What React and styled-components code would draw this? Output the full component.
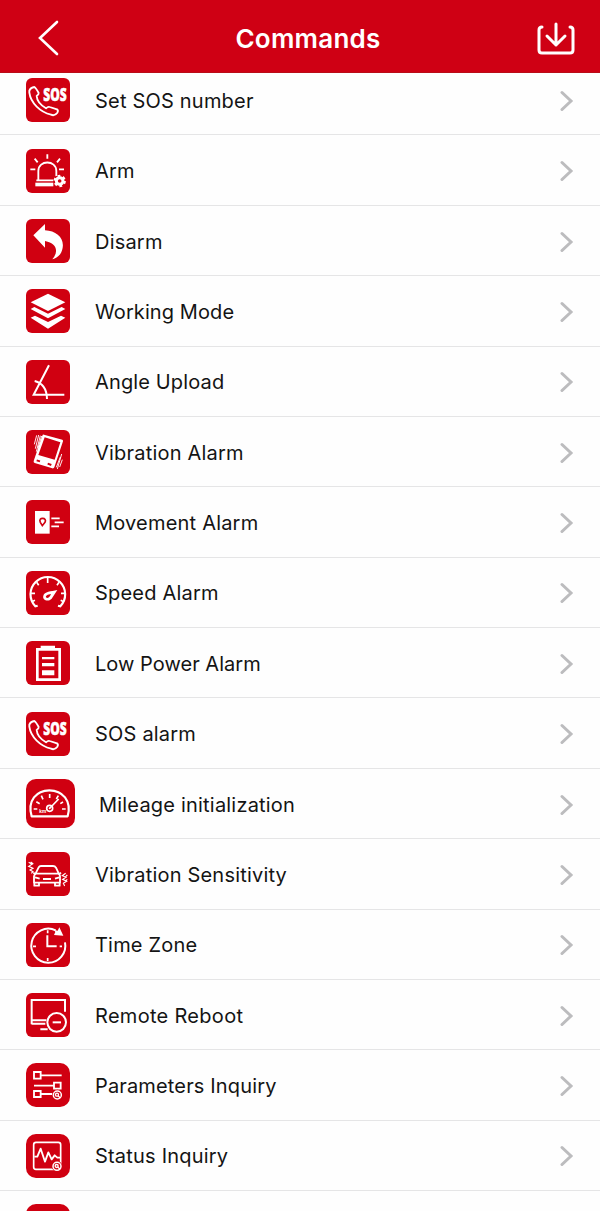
import React from 'react';
import styled, { createGlobalStyle } from 'styled-components';

const GlobalStyle = createGlobalStyle`
  * { box-sizing: border-box; }
  body { margin: 0; background: #fff; }
`;

const Screen = styled.main`
  height: 1211px;
  overflow: hidden;
  display: flex;
  flex-direction: column;
  background: #fefefe;
  font-family: Inter, 'Liberation Sans', sans-serif;
`;

const Header = styled.header`
  flex: none;
  height: 73px;
  padding: 4px 25px 0 38px;
  display: grid;
  grid-template-columns: 60px 1fr 60px;
  align-items: center;
  background: #cf0014;
  border-bottom: 1px solid #b90d18;
  color: #fff;
  z-index: 1;
`;

const Title = styled.h1`
  margin: 0;
  padding: 2px 0 0 3px;
  text-align: center;
  font-size: 26px;
  line-height: 32px;
  font-weight: 600;
  letter-spacing: 0.25px;
`;

const HeaderButton = styled.button`
  display: flex;
  justify-self: ${(p) => p.$side};
  padding: 0;
  border: 0;
  background: none;
  color: inherit;
`;

const List = styled.ul`
  flex: none;
  list-style: none;
  margin: -7.9px 0 0;
  padding: 0;
`;

const Row = styled.li`
  height: 70.38px;
  padding: 2px 26px 0;
  display: flex;
  align-items: center;
  border-bottom: 1.5px solid #e5e5e6;
`;

const Tile = styled.svg`
  flex: none;
  width: ${(p) => p.$size}px;
  height: ${(p) => p.$size}px;
  margin-bottom: 1.2px;
  border-radius: ${(p) => p.$radius}px;
  overflow: visible;
  background: #d00011;
  fill: none;
  stroke: #fff;
  stroke-width: 6;
`;

const Label = styled.span`
  flex: 1;
  margin-left: ${(p) => p.$gap}px;
  font-size: 20px;
  line-height: 26px;
  letter-spacing: ${(p) => p.$spacing}px;
  white-space: nowrap;
  color: #141414;
`;

const Chevron = styled.svg`
  flex: none;
  width: 14px;
  height: 22px;
  fill: none;
  stroke: #bcbcbe;
  stroke-width: 3;
  stroke-linecap: round;
`;

const SosText = styled.text`
  font-family: 'Open Sans', sans-serif;
  font-size: 50px;
  font-weight: 800;
  fill: #fff;
  stroke: #fff;
  stroke-width: 1.5;
`;

const UnitText = styled.text`
  font-family: Inter, sans-serif;
  font-size: 14px;
  font-weight: 700;
  fill: #fff;
  stroke: none;
`;

const solid = { fill: '#fff', stroke: 'none' };
const red = '#d00011';

const Sos = () => (
  <>
    <path strokeWidth="5.5" strokeLinejoin="round" d="M10 38Q14 28 25 27Q30 30 38 45Q39 49 32 54C33 70 45 82 60 91Q66 85 71 87L93 94Q98 98 94 104Q86 115 75 110C43 102 14 75 10 44Z" />
    <SosText x="52" y="69" textLength="70" lengthAdjust="spacingAndGlyphs">SOS</SosText>
  </>
);

const Arm = () => (
  <>
    <path strokeWidth="5.5" d="M37 92V66C37 32 91 32 91 66V82M31 94H82M64 16V29M26 29L35 40M102 29L93 40M13 61H28M99 61H114" />
    <path {...solid} d="M28 101H82V112H28Z" />
    <circle cx="101" cy="96" r="18" fill={red} stroke="none" />
    <circle cx="101" cy="96" r="10" strokeWidth="9" />
    <circle cx="101" cy="96" r="15" strokeWidth="7" strokeDasharray="8 7.7" />
  </>
);

const Disarm = () => (
  <path {...solid} d="M22 49L57 15V34C91 36 115 56 110 86C107 105 96 116 79 121C98 98 94 73 57 66V86Z" />
);

const Layers = () => (
  <g {...solid}>
    <path d="M66 14L118 40L66 66L14 40Z" />
    <path d="M14 60L25 54L66 74L107 54L118 60L66 88Z" />
    <path d="M14 86L27 80L66 99L105 80L118 86L66 119Z" />
  </g>
);

const Angle = () => (
  <path d="M69 16L23 104H115M26 63Q62 72 63 117" />
);

const Phone = () => (
  <>
    <path {...solid} fillRule="evenodd" d="M54 14L109 29Q112 31 111 34L85 112Q83 116 79 115L26 99Q22 97 23 93L49 17Q50 13 54 14ZM56 22L37 75L86 89L103 37Z" />
    <path stroke={red} strokeWidth="6" d="M32 91L42 94M65 101L76 105" />
    <path strokeWidth="2.8" d="M32 16L25 43M38 15L28 56M43 17L31 65M107 72L94 117M103 81L91 112M109 89L101 111M47 18L36 54" />
  </>
);

const Movement = () => (
  <>
    <path {...solid} d="M27 33H71V101H27Z" />
    <path stroke={red} strokeWidth="5" fill="none" d="M49 77L43 67C39 58 44 55 50 55C56 55 61 60 57 67Z" />
    <path strokeWidth="5.5" d="M76 55H101M86 67H113M76 79H99" />
  </>
);

const Speed = () => (
  <>
    <path strokeWidth="6.5" d="M35 104L28 106A52 52 0 1 1 103 106L96 104" />
    <path strokeWidth="5" d="M65 21V36M32 34L38 43M99 34L93 43M15 67H27M117 67H105M17 92L27 88M113 92L104 88" />
    <path {...solid} fillRule="evenodd" d="M94 57L77 83C66 94 48 87 52 74C55 62 75 61 94 57ZM75 69C65 70 58 74 60 79C64 84 71 79 75 69Z" />
  </>
);

const Battery = () => (
  <>
    <path strokeWidth="8" d="M34 25H101V116H34Z" />
    <path {...solid} d="M44 14H87V24H44ZM48 48H85V55H48ZM48 66H85V76H48ZM48 88H85V103H48Z" />
  </>
);

const Mileage = () => (
  <>
    <path strokeWidth="6.5" strokeLinejoin="round" d="M17 112C3 65 32 34 70 34C109 34 138 65 125 112Z" />
    <path strokeWidth="5" d="M71 45V57M46 50L51 61M31 68L41 74M23 90H34M97 50L91 60M111 69L103 74M108 90H119M72 87L98 60" />
    <circle cx="71" cy="88" r="9" strokeWidth="5" />
    <circle cx="71" cy="88" r="3" {...solid} />
    <UnitText x="40" y="103" textLength="21">km</UnitText>
  </>
);

const Car = () => (
  <>
    <path strokeWidth="5.5" strokeLinejoin="round" d="M29 64L38 46Q40 42 45 42H81Q87 42 90 47L98 64M30 65H97Q102 67 102 73V92H24V73Q25 67 30 65M22 62L29 68M105 62L98 68M25 92V101H39V93M87 93V101H101V92M51 81H75" />
    <path strokeWidth="5" d="M27 76L41 80M100 76L87 80" />
    <path strokeWidth="3.4" d="M8 31L18 37L8 43L21 49L12 54L21 59L16 64M14 30L22 36M119 64L109 71L120 76L110 82L122 88L112 94L116 102M124 69L119 74M124 82L118 87" />
  </>
);

const Clock = () => (
  <>
    <path d="M89 22A51 51 0 1 0 117 58M64 37V70H92" />
    <path {...solid} d="M84 36L88 27L84 21L95 23L100 13L112 38Z" />
    <path strokeWidth="5" d="M65 22V31M65 105V114M21 70H30M101 70H108" />
  </>
);

const Reboot = () => (
  <>
    <path d="M17 94V21H117V56M17 82H61M17 92H58M43 109H65" />
    <circle cx="92" cy="88" r="28" />
    <path d="M80 88H105" />
  </>
);

const Search = ({ cx, cy }) => (
  <>
    <circle cx={cx} cy={cy} r="16" fill={red} stroke="none" />
    <circle cx={cx} cy={cy} r="12" strokeWidth="4.5" />
    <circle cx={cx - 1} cy={cy - 1} r="4.5" strokeWidth="4" />
    <path strokeWidth="4" d={`M${cx + 2} ${cy + 2}L${cx + 9} ${cy + 9}`} />
  </>
);

const Parameters = () => (
  <>
    <path strokeWidth="5.5" d="M24 27H44V47H24ZM44 37H107M84 59H104V77H84ZM24 68H84M24 84H44V102H24ZM44 93H80" />
    <Search cx={94} cy={96} />
  </>
);

const Status = () => (
  <>
    <rect x="23" y="25" width="81" height="81" rx="7" strokeWidth="5" />
    <path strokeWidth="5.5" strokeLinejoin="round" d="M25 68H34L44 44L57 83L67 55L77 76L86 64L94 71H103" />
    <Search cx={93} cy={97} />
  </>
);

const commands = [
  { label: 'Set SOS number', icon: Sos },
  { label: 'Arm', icon: Arm },
  { label: 'Disarm', icon: Disarm },
  { label: 'Working Mode', icon: Layers, spacing: 0.1 },
  { label: 'Angle Upload', icon: Angle, spacing: 0.14 },
  { label: 'Vibration Alarm', icon: Phone },
  { label: 'Movement Alarm', icon: Movement },
  { label: 'Speed Alarm', icon: Speed },
  { label: 'Low Power Alarm', icon: Battery, spacing: 0.03 },
  { label: 'SOS alarm', icon: Sos },
  { label: 'Mileage initialization', icon: Mileage, size: 49, radius: 10, gap: 24 },
  { label: 'Vibration Sensitivity', icon: Car },
  { label: 'Time Zone', icon: Clock },
  { label: 'Remote Reboot', icon: Reboot, spacing: 0.3 },
  { label: 'Parameters Inquiry', icon: Parameters, radius: 10, spacing: 0.15 },
  { label: 'Status Inquiry', icon: Status, radius: 10 },
  { label: '', icon: () => null, radius: 10 },
];

function CommandRow({ label, icon: Icon, size = 44, radius = 6, gap = 25, spacing = 0.2 }) {
  return (
    <Row>
      <Tile $size={size} $radius={radius} viewBox={`0 0 ${size * 3} ${size * 3}`}>
        <Icon />
      </Tile>
      <Label $gap={gap} $spacing={spacing}>{label}</Label>
      <Chevron viewBox="0 0 14 22">
        <path d="M2 2.5L11 11L2 19.5" />
      </Chevron>
    </Row>
  );
}

export default function App() {
  return (
    <Screen>
      <GlobalStyle />
      <Header>
        <HeaderButton $side="start" aria-label="Back">
          <svg width="22" height="38" viewBox="0 0 22 38" fill="none" stroke="currentColor" strokeWidth="2.6" strokeLinecap="round">
            <path d="M19 3L2 19L19 35" />
          </svg>
        </HeaderButton>
        <Title>Commands</Title>
        <HeaderButton $side="end" aria-label="Download">
          <svg width="38" height="34" viewBox="0 0 38 34" fill="none" stroke="currentColor" strokeWidth="3" strokeLinecap="round" strokeLinejoin="round">
            <path d="M5 6Q2 6 2 9V29Q2 32 5 32H33Q36 32 36 29V9Q36 6 33 6M19 3V24M10 15L19 24L28 15" />
          </svg>
        </HeaderButton>
      </Header>
      <List>
        {commands.map((command, index) => (
          <CommandRow key={index} {...command} />
        ))}
      </List>
    </Screen>
  );
}
